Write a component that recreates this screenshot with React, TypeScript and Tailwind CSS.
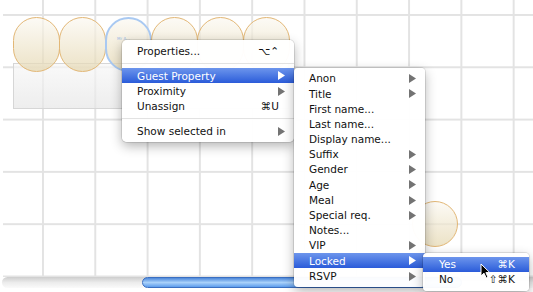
import clsx from "clsx";

type Item = { label?: string; sc?: string; sub?: boolean; active?: boolean; sep?: boolean };

const mainItems: Item[] = [
  { label: "Properties...", sc: "⌥⌃" },
  { sep: true },
  { label: "Guest Property", sub: true, active: true },
  { label: "Proximity", sub: true },
  { label: "Unassign", sc: "⌘U" },
  { sep: true },
  { label: "Show selected in", sub: true },
];

const guestItems: Item[] = [
  { label: "Anon", sub: true },
  { label: "Title", sub: true },
  { label: "First name..." },
  { label: "Last name..." },
  { label: "Display name..." },
  { label: "Suffix", sub: true },
  { label: "Gender", sub: true },
  { label: "Age", sub: true },
  { label: "Meal", sub: true },
  { label: "Special req.", sub: true },
  { label: "Notes..." },
  { label: "VIP", sub: true },
  { label: "Locked", sub: true, active: true },
  { label: "RSVP", sub: true },
];

const lockedItems: Item[] = [
  { label: "Yes", sc: "⌘K", active: true },
  { label: "No", sc: "⇧⌘K" },
];

const Arrow = ({ white }: { white?: boolean }) => (
  <svg width="7" height="9" viewBox="0 0 7 9" className="shrink-0">
    <path d="M0 0 L7 4.5 L0 9 Z" fill={white ? "#ffffff" : "#737373"} />
  </svg>
);

const MenuRows = ({ items, pl, pr }: { items: Item[]; pl: string; pr: string }) => (
  <>
    {items.map((it, i) =>
      it.sep ? (
        <div key={i} className="flex h-[9.6px] items-center">
          <div className="h-px w-full bg-[#e2e2e2]" />
        </div>
      ) : (
        <div
          key={i}
          className={clsx(
            "flex h-[15.2px] items-center justify-between",
            pl,
            pr,
            it.active ? "bg-gradient-to-b from-[#6d95ec] to-[#2b5bd9] text-white" : "text-[#111]"
          )}
        >
          <span>{it.label}</span>
          {it.sc && <span className={clsx(it.sub === undefined && pr === "pr-[9px]" && "mr-[6px]")}>{it.sc}</span>}
          {it.sub && <Arrow white={it.active} />}
        </div>
      )
    )}
  </>
);

const Seat = ({ selected }: { selected?: boolean }) => (
  <div
    className={clsx(
      "flex h-[55px] w-[47px] shrink-0 items-center justify-center rounded-full bg-gradient-to-b from-[#fbf8f1]/70 to-[#e4d6ae]/70",
      selected ? "border-2 border-[#a9c9f2]" : "border-[1.5px] border-[#e2b776]"
    )}
  >
    {selected && <span className="-mt-[12px] -ml-[10px] text-[4px] text-[#9dbbe6]">Mr A...</span>}
  </div>
);

export default function App() {
  return (
    <div className="relative h-[292px] w-[533px] overflow-hidden bg-white font-['DejaVu_Sans',sans-serif] text-[10.5px] leading-none">
      {/* canvas with grid */}
      <div className="relative ml-[3px] h-[277px] bg-[linear-gradient(to_right,#e3e3e3_1.5px,transparent_1.5px),linear-gradient(to_bottom,#e3e3e3_1.5px,transparent_1.5px)] [background-position:39px_14px] [background-size:52.3px_52.3px]">
        {/* long table */}
        <div className="absolute left-[10px] top-[17px]">
          <div className="absolute left-0 top-[46px] h-[46px] w-[276px] border border-[#d6d6d6] bg-gradient-to-b from-[#f7f7f7]/70 to-[#e6e6e6]/70" />
          <div className="relative flex">
            <Seat />
            <div className="-ml-[1px]"><Seat /></div>
            <div className="-ml-[1px]"><Seat selected /></div>
            <div className="-ml-[1px]"><Seat /></div>
            <div className="-ml-[1px]"><Seat /></div>
            <div className="-ml-[1px]"><Seat /></div>
          </div>
        </div>
        {/* round table seat */}
        <div className="absolute left-[409px] top-[201px] h-[46px] w-[46px] rounded-full border-[1.5px] border-[#e2b776] bg-gradient-to-b from-[#fbf8f1]/70 to-[#e4d6ae]/70" />
      </div>

      {/* scroll bar */}
      <div className="ml-[2px] flex h-[11px] rounded-l-full bg-gradient-to-b from-[#cdcdcd] via-[#ececec] to-[#fafafa]">
        <div className="w-[140px] shrink-0" />
        <div className="h-[11px] w-[320px] rounded-full border border-[#3a6fc2] bg-gradient-to-b from-[#4d88da] via-[#a9d1fa] to-[#5c9cec]" />
      </div>

      {/* context menu */}
      <div className="absolute left-[122px] top-[40px] w-[172px] rounded-[5px] bg-white/[0.97] py-[3.5px] shadow-[0_0_0_1px_rgba(0,0,0,0.1),0_4px_12px_rgba(0,0,0,0.3)]">
        <MenuRows items={mainItems} pl="pl-[15px]" pr="pr-[9px]" />
      </div>

      {/* guest property submenu */}
      <div className="absolute left-[294px] top-[68px] w-[131px] rounded-[4px] bg-white/[0.97] py-[3px] shadow-[0_0_0_1px_rgba(0,0,0,0.1),0_4px_12px_rgba(0,0,0,0.3)]">
        <MenuRows items={guestItems} pl="pl-[15px]" pr="pr-[9px]" />
      </div>

      {/* locked submenu */}
      <div className="absolute left-[423px] top-[252.5px] w-[106px] rounded-[4px] bg-white/[0.97] py-[4px] shadow-[0_0_0_1px_rgba(0,0,0,0.1),0_4px_12px_rgba(0,0,0,0.3)]">
        <MenuRows items={lockedItems} pl="pl-[16px]" pr="pr-[14px]" />
      </div>

      {/* mouse pointer */}
      <svg className="absolute left-[480px] top-[263px]" width="11" height="16" viewBox="0 0 11 16">
        <path d="M1 1 L1 13 L4 10.2 L6.2 15 L8 14.2 L5.9 9.6 L9.8 9.6 Z" fill="#000" stroke="#fff" strokeWidth="1" strokeLinejoin="round" />
      </svg>
    </div>
  );
}
